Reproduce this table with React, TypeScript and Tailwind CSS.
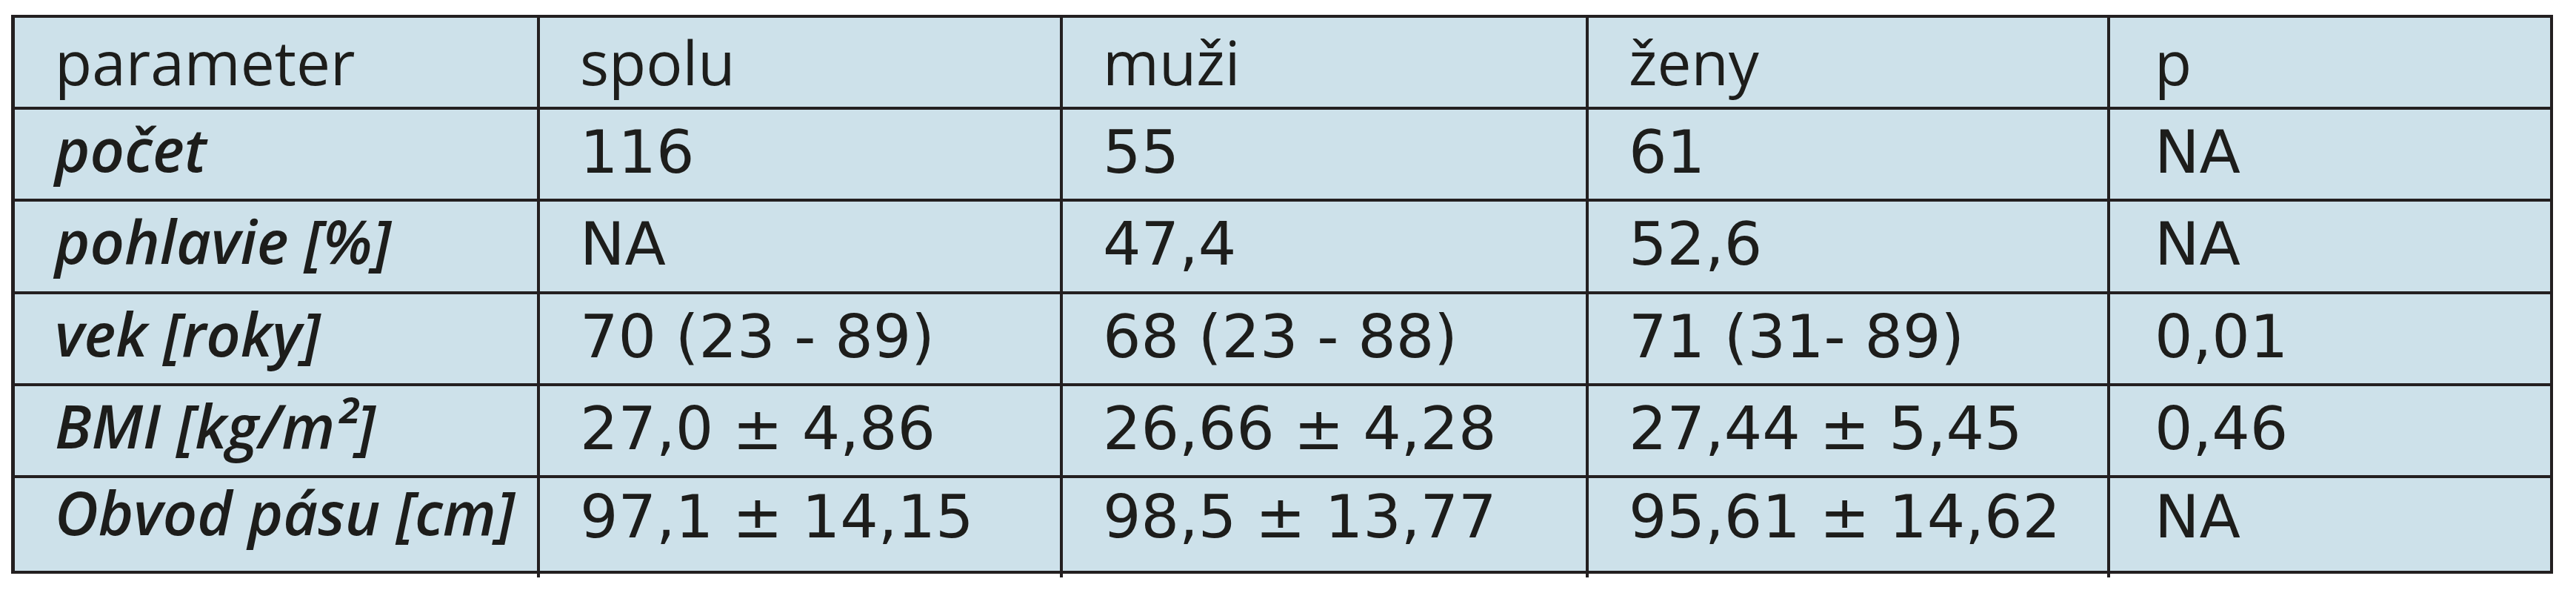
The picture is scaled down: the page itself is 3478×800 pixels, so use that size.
const rows = [
    { label: 'počet', values: ['116', '55', '61', 'NA'] },
    { label: 'pohlavie [%]', values: ['NA', '47,4', '52,6', 'NA'] },
    { label: 'vek [roky]', values: ['70 (23 - 89)', '68 (23 - 88)', '71 (31- 89)', '0,01'] },
    { label: 'BMI [kg/m²]', values: ['27,0 ± 4,86', '26,66 ± 4,28', '27,44 ± 5,45', '0,46'] },
    { label: 'Obvod pásu [cm]', values: ['97,1 ± 14,15', '98,5 ± 13,77', '95,61 ± 14,62', 'NA'] },
]

const headers = ['parameter', 'spolu', 'muži', 'ženy', 'p']

const App = () => {
    return (
        <div className="min-h-screen bg-white text-[#1d1d1b]">
            <div className="ml-[15px] pt-[20px]">
                <div className="grid w-fit grid-cols-[705px_702px_706px_700px_594px] grid-rows-[120px_120px_121px_120px_120px_125px] gap-[4px] bg-[#231f20] pt-[4px] pr-[4px] pb-[4px] pl-[5px]">
                    {headers.map((h, i) => (
                        <div
                            key={h}
                            className={`bg-[#cde1ea] pt-[18px] font-['Open_Sans',sans-serif] text-[82px] leading-[82px] ${i === 4 ? 'pl-[60px]' : 'pl-[54px]'}`}
                        >
                            {h}
                        </div>
                    ))}
                    {rows.map((row, r) => {
                        const last = r === rows.length - 1
                        return [
                            <div
                                key={row.label}
                                className={`bg-[#cde1ea] pl-[54px] font-['Open_Sans',sans-serif] text-[81px] leading-[82px] font-semibold italic whitespace-nowrap ${last ? 'pt-[5px]' : 'pt-[12px]'}`}
                            >
                                {row.label}
                            </div>,
                            ...row.values.map((v, c) => (
                                <div
                                    key={`${r}-${c}`}
                                    className={`bg-[#cde1ea] font-['DejaVu_Sans',sans-serif] text-[81px] leading-[82px] whitespace-nowrap ${c === 3 ? 'pl-[60px]' : 'pl-[54px]'} ${last ? 'pt-[11px]' : 'pt-[16px]'}`}
                                >
                                    {v}
                                </div>
                            )),
                        ]
                    })}
                </div>
                {/* column rules run a few px past the bottom edge */}
                <div className="ml-[5px] grid h-[5px] w-fit grid-cols-[705px_702px_706px_700px_594px] gap-x-[4px] bg-[#231f20]">
                    <div className="bg-white" />
                    <div className="bg-white" />
                    <div className="bg-white" />
                    <div className="bg-white" />
                    <div className="bg-white" />
                </div>
            </div>
        </div>
    )
}

export default App
